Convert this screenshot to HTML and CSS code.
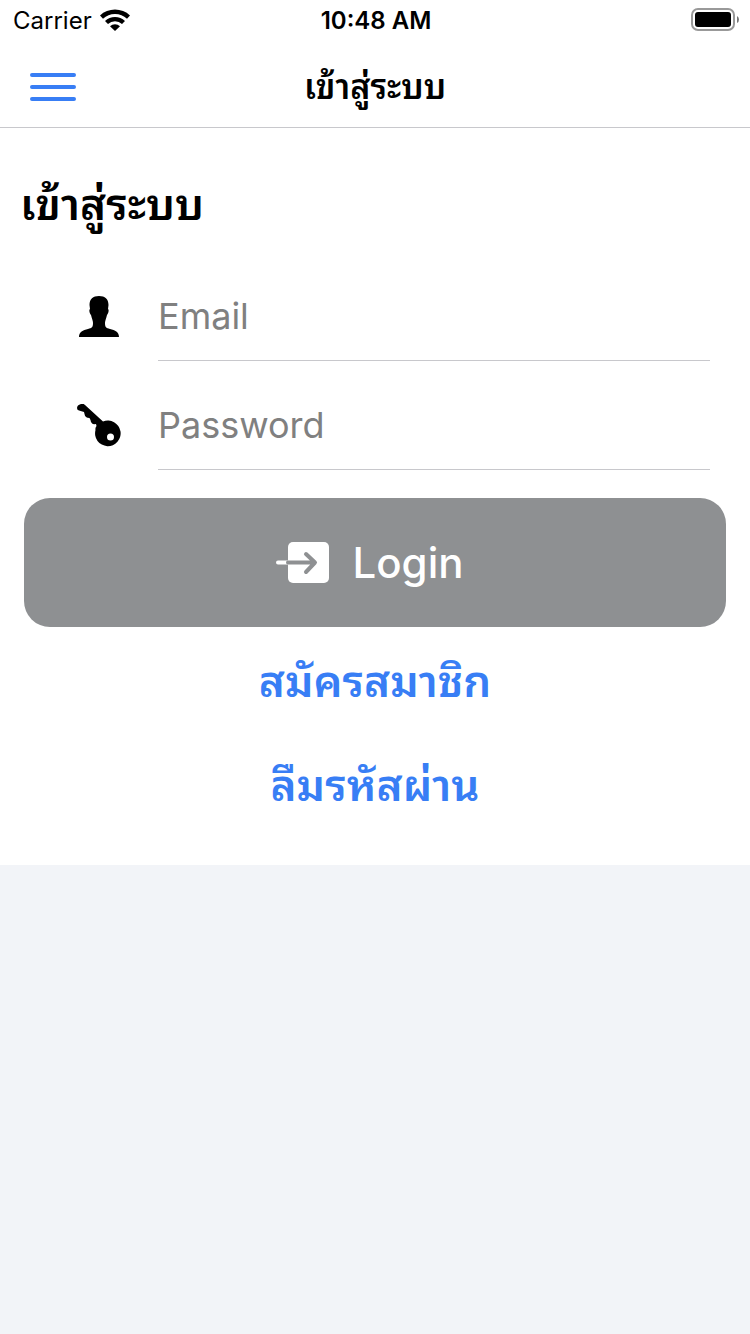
FILE: index.html
```html
<!DOCTYPE html>
<html lang="th">
<head>
<meta charset="utf-8">
<meta name="viewport" content="width=device-width, initial-scale=1">
<title>เข้าสู่ระบบ</title>
<link rel="stylesheet" href="styles.css">
</head>
<body>
<div class="status">
  <div class="status-left">
    <span>Carrier</span>
    <svg class="wifi" viewBox="0 0 30 22" aria-hidden="true"><path d="M0 6.500A22 22 0 0 1 30 6.500L27 9.800A17.500 17.500 0 0 0 3 9.800Z"/><path d="M5 12A14.500 14.500 0 0 1 25 12L22 15A10.200 10.200 0 0 0 8 15Z"/><path d="M10 17.200A7.200 7.200 0 0 1 20 17.200L15 22Z"/></svg>
  </div>
  <time class="clock">10:48 AM</time>
  <svg class="battery" viewBox="0 0 48 24" aria-hidden="true"><rect x="1" y="1" width="42" height="21" rx="6" fill="none" stroke="#999" stroke-width="2"/><rect x="4" y="4" width="36" height="15" rx="3"/><path d="M46 8Q48 9 48 11.500T46 15Z" fill="#777"/></svg>
</div>
<header class="navbar">
  <button class="menu" type="button" aria-label="Menu"><svg viewBox="0 0 46 28"><path d="M2 2H44M2 14H44M2 26H44"/></svg></button>
  <div class="nav-title">เข้าสู่ระบบ</div>
</header>
<main class="panel">
  <h1 class="heading">เข้าสู่ระบบ</h1>
  <form class="form">
    <div class="field">
      <label class="field-icon" for="email" aria-label="Email"><svg viewBox="0 0 44 44"><path d="M22 1C28 1 31.500 4 31.500 10L31 14C32.500 15 31 19 30 20C29 24 28 26 28 28C28 32 29 33 33 34C38 35 42 37 42 42H2C2 37 6 35 11 34C15 33 16 32 16 28C16 26 15 24 14 20C13 19 11.500 15 13 14L12.500 10C12.500 4 16 1 22 1Z"/></svg></label>
      <input class="field-input" id="email" type="email" placeholder="Email">
    </div>
    <div class="field">
      <label class="field-icon" for="password" aria-label="Password"><svg viewBox="0 0 44 44"><path fill-rule="evenodd" d="M0 4Q0 1 4 0Q6-1 8 1L26 17.500A12.800 12.800 0 1 1 18.500 26Q18 24 19.500 22L19 20Q14 21 13.500 16L12.500 14Q8 14 7.500 10L7 8L2 6.500Q0 6 0 4ZM33.500 29.500A3.500 3.500 0 1 0 33.500 36.500A3.500 3.500 0 1 0 33.500 29.500Z"/></svg></label>
      <input class="field-input" id="password" type="password" placeholder="Password">
    </div>
    <button class="login" type="submit"><svg viewBox="0 0 54 42" aria-hidden="true"><rect x="13" y="0" width="41" height="41" rx="5" fill="#fff"/><path d="M3 20.500H13" stroke="#fff"/><path d="M13 20.500H39M31 12L40 20.500L31 30" stroke="#8e9092"/></svg><span>Login</span></button>
  </form>
  <nav class="links"><a href="#register">สมัครสมาชิก</a><a href="#forgot">ลืมรหัสผ่าน</a></nav>
</main>
</body>
</html>
```
FILE: styles.css
```css
* { box-sizing: border-box; }
body { margin: 0; background: #f2f4f8; color: #000; font-family: Inter, "Noto Sans Thai Looped", "Noto Looped Thai", Loma, Garuda, Waree, "Noto Sans Thai", sans-serif; }
.status { display: grid; grid-template-columns: 1fr auto 1fr; align-items: center; height: 40px; padding: 0 11px 0 13px; background: #fff; font-size: 24px; }
.status-left { display: flex; align-items: center; gap: 8px; }
.wifi { width: 30px; height: 22px; }
.clock { font-weight: 600; }
.battery { width: 48px; height: 24px; justify-self: end; }
.navbar { display: grid; grid-template-columns: 1fr auto 1fr; align-items: center; height: 88px; padding: 6px 30px 0; background: #fff; border-bottom: 1px solid #c8c8cc; }
.menu { width: 46px; height: 28px; padding: 0; border: 0; background: none; }
.menu svg { display: block; fill: none; stroke: #387ef5; stroke-width: 4; stroke-linecap: round; }
.nav-title { font-size: 34px; line-height: 48px; font-weight: 600; }
.panel { padding: 44px 24px 48px 20px; background: #fff; }
.heading { margin: 0; font-size: 44px; line-height: 64px; font-weight: 600; }
.form { display: flex; flex-direction: column; padding: 26px 0 0 4px; }
.field { display: flex; align-items: center; height: 109px; padding: 0 16px 0 53px; }
.field-icon { width: 81px; }
.field-icon svg { display: block; width: 44px; height: 44px; }
.field-input { flex: 1; min-width: 0; height: 88px; padding: 0; border: 0; border-bottom: 1px solid #c8c8cc; outline: 0; background: none; font: 36px/1 Inter, sans-serif; }
.field-input::placeholder { color: #808080; opacity: 1; }
.login { display: flex; align-items: center; justify-content: center; gap: 24px; height: 129px; margin-top: 18px; padding: 0 12px 0 0; border: 0; border-radius: 26px; background: #8e9092; color: #fff; font: 500 42px/1 Inter, sans-serif; }
.login svg { width: 54px; height: 42px; fill: none; stroke-width: 4; stroke-linecap: round; stroke-linejoin: round; }
.links { display: flex; flex-direction: column; align-items: center; gap: 40px; padding: 22px 0 0 4px; }
.links a { color: #387ef5; font-size: 44px; font-weight: 600; line-height: 64px; text-decoration: none; }
```
